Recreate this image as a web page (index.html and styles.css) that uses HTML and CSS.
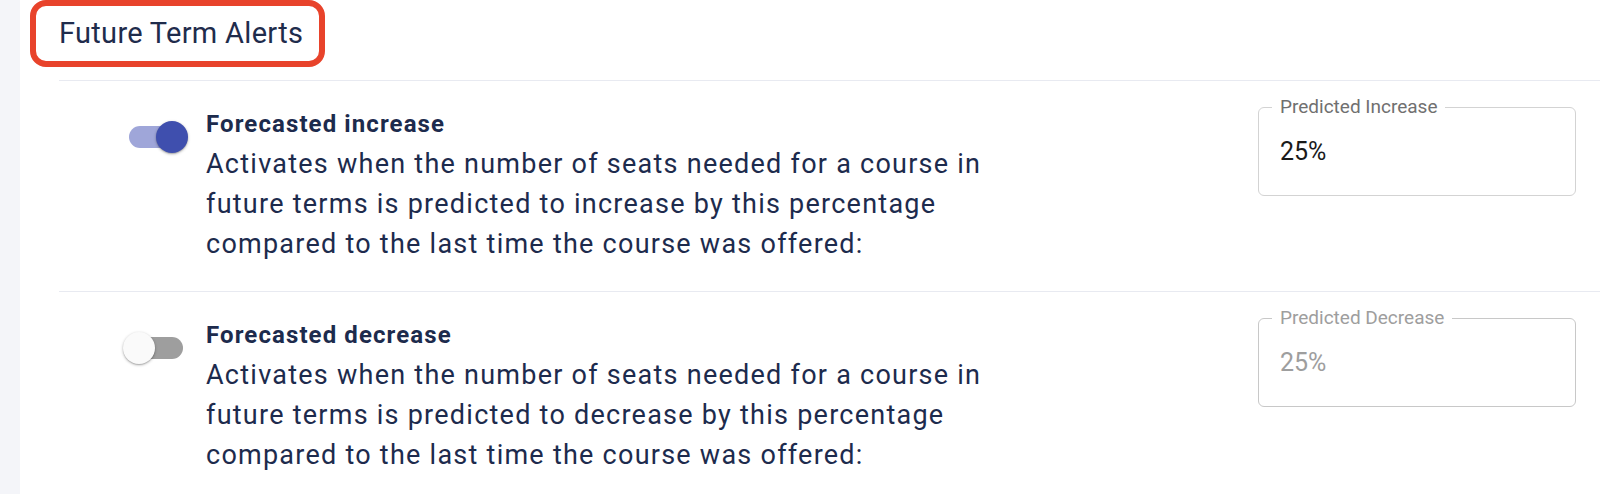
FILE: index.html
```html
<!DOCTYPE html>
<html lang="en">
<head>
<meta charset="utf-8">
<title>Future Term Alerts</title>
<link rel="stylesheet" href="styles.css">
</head>
<body>
<div class="page">
  <aside class="rail"></aside>
  <main class="main">
    <h2 class="section-title">Future Term Alerts</h2>
    <div class="rows">
      <div class="row">
        <span class="switch is-on"><span class="track"></span><span class="knob"></span></span>
        <div class="copy">
          <div class="copy-title">Forecasted increase</div>
          <p class="copy-text">Activates when the number of seats needed for a course in<br>future terms is predicted to increase by this percentage<br>compared to the last time the course was offered:</p>
        </div>
        <fieldset class="field">
          <legend class="field-label">Predicted Increase</legend>
          <div class="field-value">25%</div>
        </fieldset>
      </div>
      <div class="row">
        <span class="switch"><span class="track"></span><span class="knob"></span></span>
        <div class="copy">
          <div class="copy-title">Forecasted decrease</div>
          <p class="copy-text">Activates when the number of seats needed for a course in<br>future terms is predicted to decrease by this percentage<br>compared to the last time the course was offered:</p>
        </div>
        <fieldset class="field is-disabled">
          <legend class="field-label">Predicted Decrease</legend>
          <div class="field-value">25%</div>
        </fieldset>
      </div>
    </div>
  </main>
</div>
</body>
</html>
```
FILE: styles.css
```css
html, body {
  margin: 0;
  padding: 0;
  background: #ffffff;
}

body {
  font-family: Roboto, "Liberation Sans", Arial, sans-serif;
  color: #1d2b4d;
  width: 1600px;
  height: 494px;
  overflow: hidden;
}

.page {
  display: flex;
  height: 494px;
}

.rail {
  width: 20px;
  flex: none;
  background: #f4f5f9;
}

.main {
  flex: 1;
  padding-left: 10px;
}

.section-title {
  display: inline-block;
  margin: 0;
  font-size: 29px;
  font-weight: 400;
  letter-spacing: 0.3px;
  line-height: 55px;
  color: #1f2c4c;
  border: 6px solid #e8432b;
  border-radius: 16px;
  padding: 0 16px 0 23px;
}

.rows {
  margin-top: 13px;
  margin-left: 29px;
}

.row {
  display: flex;
  align-items: flex-start;
  border-top: 1px solid #e8eaf1;
  padding: 16px 24px 27px 64px;
}

.switch {
  position: relative;
  flex: none;
  width: 66px;
  height: 32px;
  margin-top: 24px;
}

.track {
  position: absolute;
  left: 6px;
  top: 5px;
  width: 54px;
  height: 22px;
  border-radius: 11px;
  background: #9e9e9e;
}

.knob {
  position: absolute;
  left: 0;
  top: 0;
  width: 32px;
  height: 32px;
  border-radius: 50%;
  background: #fafafa;
  box-shadow: 0 1px 3px rgba(0, 0, 0, 0.3), 0 1px 1px rgba(0, 0, 0, 0.12);
}

.switch.is-on .track {
  background: #9fa6d9;
}

.switch.is-on .knob {
  left: 33px;
  background: #3f4fae;
}

.copy {
  margin-left: 17px;
  margin-top: 13px;
}

.copy-title {
  font-size: 24px;
  font-weight: 700;
  letter-spacing: 1.1px;
  line-height: 28px;
}

.copy-text {
  margin: 6px 0 0;
  font-size: 27px;
  letter-spacing: 1.25px;
  line-height: 40px;
}

.field {
  margin: 0 0 0 auto;
  width: 318px;
  height: 99px;
  box-sizing: border-box;
  border: 1px solid #d3d3d3;
  border-radius: 6px;
  padding: 0 0 0 13px;
  min-width: 0;
}

.field-label {
  padding: 0 8px;
  font-size: 19px;
  line-height: 20px;
  color: #707070;
}

.field-value {
  margin-top: 20px;
  padding-left: 8px;
  font-size: 25px;
  line-height: 30px;
  color: #1a1a1a;
}

.field.is-disabled {
  border-color: #c8c8c8;
}

.field.is-disabled .field-label,
.field.is-disabled .field-value {
  color: #9e9e9e;
}
```
